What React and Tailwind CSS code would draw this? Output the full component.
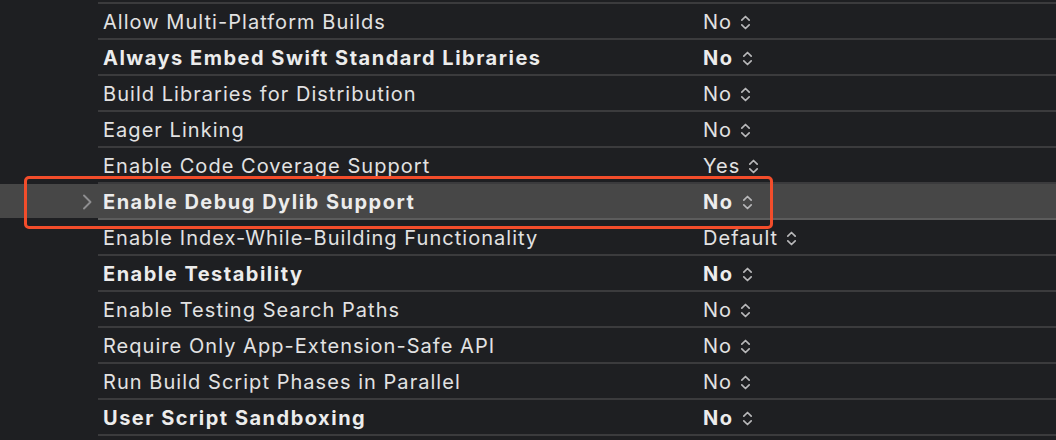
import React from "react";

const rows = [
  { label: "Allow Multi-Platform Builds", value: "No" },
  { label: "Always Embed Swift Standard Libraries", value: "No", bold: true },
  { label: "Build Libraries for Distribution", value: "No" },
  { label: "Eager Linking", value: "No" },
  { label: "Enable Code Coverage Support", value: "Yes" },
  { label: "Enable Debug Dylib Support", value: "No", bold: true, selected: true },
  { label: "Enable Index-While-Building Functionality", value: "Default" },
  { label: "Enable Testability", value: "No", bold: true },
  { label: "Enable Testing Search Paths", value: "No" },
  { label: "Require Only App-Extension-Safe API", value: "No" },
  { label: "Run Build Script Phases in Parallel", value: "No" },
  { label: "User Script Sandboxing", value: "No", bold: true },
];

function UpDown() {
  return (
    <svg width="11" height="17" viewBox="0 0 11 17" className="ml-[8px] shrink-0">
      <path d="M1.8 6.2 L5.5 2.5 L9.2 6.2 M1.8 10.8 L5.5 14.5 L9.2 10.8" fill="none" stroke="#b8b8ba" strokeWidth="1.7" strokeLinecap="round" strokeLinejoin="round" />
    </svg>
  );
}

function Row({ label, value, bold, selected }) {
  const weight = bold
    ? "font-bold text-[#ececec] tracking-[0.075em]"
    : "font-normal text-[#e2e2e2] tracking-[0.052em]";
  return (
    <div className="relative">
      <div className={`h-[34px] flex items-center pt-[2px] ${selected ? "bg-[#474747]" : ""}`}>
        <div className="w-[94px] shrink-0 flex justify-end pr-[1px]">
          {selected && (
            <svg width="12" height="18" viewBox="0 0 12 18">
              <path d="M3 2.5 L9.5 9 L3 15.5" fill="none" stroke="#8e8e90" strokeWidth="1.9" strokeLinecap="round" strokeLinejoin="round" />
            </svg>
          )}
        </div>
        <div className={`w-[609px] pl-[9px] shrink-0 whitespace-nowrap ${weight}`}>{label}</div>
        <div className={`flex items-center ${weight}`}>
          {value}
          <UpDown />
        </div>
      </div>
      <div className={`h-[2px] ml-[98px] ${selected ? "bg-[#5c5c5c]" : "bg-[#3b3b3d]"}`} />
      {selected && (
        <div className="absolute left-[24px] top-[-8px] w-[749px] h-[53px] border-[3px] border-[#f24d2b] rounded-[5px]" />
      )}
    </div>
  );
}

export default function App() {
  return (
    <div
      className="w-[1056px] h-[440px] overflow-hidden bg-[#1e1f22] pt-[2px] text-[20px] leading-none"
      style={{ fontFamily: "Inter, 'Liberation Sans', sans-serif" }}
    >
      <div className="h-[2px] ml-[98px] bg-[#3b3b3d]" />
      {rows.map((r) => (
        <Row key={r.label} {...r} />
      ))}
    </div>
  );
}
